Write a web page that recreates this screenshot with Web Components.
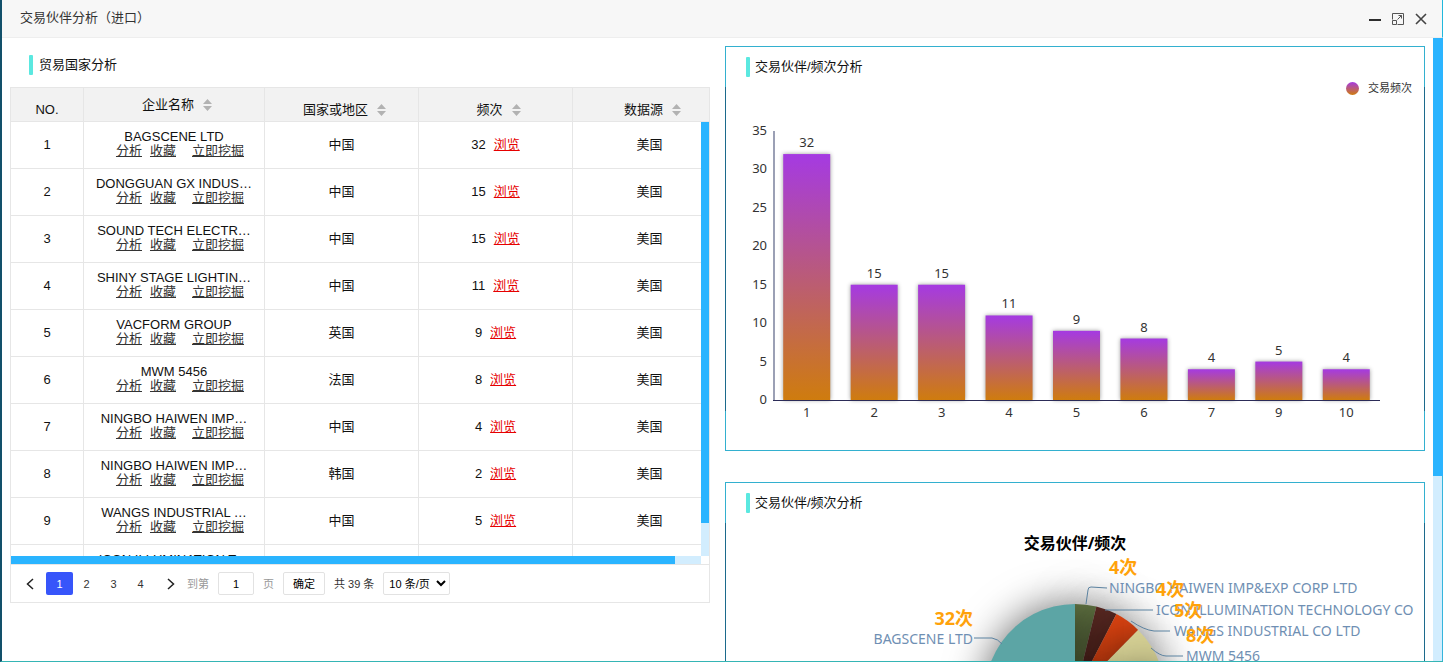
<!DOCTYPE html>
<html lang="zh-CN">
<head>
<meta charset="utf-8">
<title>交易伙伴分析（进口）</title>
<style>
html, body { margin: 0; height: 100%; overflow: hidden; }
body { font: 13px/18px "Liberation Sans", "Noto Sans CJK SC", sans-serif; color: #111; background: #0a3550; }
</style>
</head>
<body>
<app-window heading="交易伙伴分析（进口）">
  <div slot="left">
    <section-title>贸易国家分析</section-title>
    <partner-table></partner-table>
  </div>
  <chart-card slot="right" heading="交易伙伴/频次分析"><bar-chart></bar-chart></chart-card>
  <chart-card slot="right" heading="交易伙伴/频次分析"><pie-chart></pie-chart></chart-card>
</app-window>

<script>
const define = (name, render) => customElements.define(name, class extends HTMLElement {
  connectedCallback() {
    if (this.shadowRoot) return;
    this.attachShadow({ mode: 'open' }).innerHTML = render(this);
  }
});

define('section-title', () => `
<style>
:host { display: flex; align-items: center; gap: 6px; padding: 17px 0 12px 19px; }
i { width: 4px; height: 20px; border-radius: 1px; background: #5be8e0; }
h2 { margin: 0; font: inherit; }
</style>
<i></i><h2><slot></slot></h2>`);

define('chart-card', el => `
<style>
:host { display: block; border: 1px solid; border-image: linear-gradient(#33b0cf 41px, #1c6a8c 41px calc(100% - 40px), #33b0cf calc(100% - 40px)) 1; }
section-title { padding: 10px 0 10px 20px; gap: 5px; }
</style>
<section-title>${el.getAttribute('heading')}</section-title><slot></slot>`);

define('app-window', el => `
<style>
:host { display: flex; flex-direction: column; height: 100vh; box-sizing: border-box; border-left: 2px solid #12506a; border-bottom: 1px solid #35b5b5; background: #fff; }
header { display: flex; align-items: center; justify-content: space-between; height: 37px; padding: 0 14px 0 18px; background: #f7f7f7; border-bottom: 1px solid #eee; border-right: 1px solid #22b8dc; }
h1 { margin: 0; padding-bottom: 2px; font: inherit; color: #333; }
nav { display: flex; gap: 9px; }
button { display: flex; padding: 0; border: 0; background: none; }
main { flex: 1; min-height: 0; display: grid; grid-template-columns: 1fr 10px; }
.content { min-width: 0; overflow: hidden; display: grid; grid-template-columns: 1fr 1fr; gap: 15px; padding: 0 8px; }
.left { min-width: 0; }
.right { min-width: 0; display: flex; flex-direction: column; gap: 31px; padding-top: 8px; }
.bar { background: #d2edfe; border-right: 1px solid #35b5dc; }
.thumb { height: 438px; margin-right: -1px; background: #2ab4ff; }
</style>
<header><h1>${el.getAttribute('heading')}</h1>
<nav>
<button aria-label="最小化"><svg width="14" height="14"><path d="M1 8h12" stroke="#2d2d2d" stroke-width="2"/></svg></button>
<button aria-label="最大化"><svg width="14" height="14" fill="none" stroke="#555"><path d="M1.500 7.500V1.500h11v11H6.500M1.500 8.500h4v4h-4zM6.500 7.500L10.500 3.500M7.500 3.500H10.500V6.500"/></svg></button>
<button aria-label="关闭"><svg width="14" height="14"><path d="M2 2l10 10M12 2L2 12" stroke="#444" stroke-width="1.600"/></svg></button>
</nav></header>
<main><div class="content"><div class="left"><slot name="left"></slot></div><div class="right"><slot name="right"></slot></div></div>
<div class="bar"><div class="thumb"></div></div></main>`);

const ROWS = [
  ['BAGSCENE LTD', '中国', 32], ['DONGGUAN GX INDUS…', '中国', 15],
  ['SOUND TECH ELECTR…', '中国', 15], ['SHINY STAGE LIGHTIN…', '中国', 11],
  ['VACFORM GROUP', '英国', 9], ['MWM 5456', '法国', 8],
  ['NINGBO HAIWEN IMP…', '中国', 4], ['NINGBO HAIWEN IMP…', '韩国', 2],
  ['WANGS INDUSTRIAL …', '中国', 5], ['ICON ILLUMINATION T…', '中国', 4]
];

define('sort-label', () => `
<style>
:host { display: inline-flex; align-items: center; gap: 9px; padding-left: 6px; }
</style>
<span><slot></slot></span><svg width="9" height="12" fill="#b2b2b2"><path d="M0 5L4.500 0 9 5zM0 7h9L4.500 12z"/></svg>`);

define('partner-table', () => `
<style>
:host { display: block; border: 1px solid #e6e6e6; }
.view { display: grid; grid-template: 34px 434px 8px / 1fr 8px; }
.clip { grid-area: 1 / 1 / 3 / 3; overflow: hidden; }
table { table-layout: fixed; width: 716px; border-collapse: separate; border-spacing: 0; }
th, td { box-sizing: border-box; padding: 0; border: 0 solid #e6e6e6; border-width: 0 1px 1px 0; text-align: center; font-weight: inherit; }
th { height: 34px; background: #f2f2f2; padding-top: 10px; }
th.name { padding: 0; }
td { height: 47px; }
.title { line-height: 14px; white-space: nowrap; }
.links { display: flex; justify-content: center; padding: 0 0 2px 12px; line-height: 14px; }
.links a { color: #333; margin-right: 8px; }
.links a + a { margin-right: 16px; }
.links a:last-child { margin: 0; }
.count a { color: #e60000; margin-left: 8px; }
.v { grid-area: 2 / 2; background: #d2edfe; }
.v i { display: block; height: 401px; background: #2ab4ff; }
.h { grid-area: 3 / 1; background: #d2edfe; }
.h i { display: block; width: calc(100% - 26px); height: 8px; background: #2ab4ff; }
.v, .h { position: relative; }
</style>
<div class="view"><div class="clip"><table>
<colgroup><col style="width:73px"><col style="width:181px"><col style="width:154px"><col style="width:154px"><col style="width:154px"></colgroup>
<thead><tr><th>NO.</th><th class="name"><sort-label>企业名称</sort-label></th><th><sort-label>国家或地区</sort-label></th><th><sort-label>频次</sort-label></th><th><sort-label>数据源</sort-label></th></tr></thead>
<tbody>${ROWS.map(([n, c, k], i) => `<tr><td>${i + 1}</td><td><div class="title">${n}</div><div class="links"><a href="#">分析</a><a href="#">收藏</a><a href="#">立即挖掘</a></div></td><td>${c}</td><td class="count">${k}<a href="#">浏览</a></td><td>美国</td></tr>`).join('')}</tbody>
</table></div><div class="v"><i></i></div><div class="h"><i></i></div></div>
<page-bar></page-bar>`);

define('page-bar', () => `
<style>
:host { display: flex; align-items: center; gap: 9px; height: 37px; padding: 0 2px; border-top: 1px solid #e6e6e6; font-size: 11px; line-height: 16px; color: #333; }
nav { display: flex; margin-right: -9px; }
nav a { display: flex; align-items: center; justify-content: center; width: 27px; height: 23px; color: #333; text-decoration: none; }
nav a:first-child, nav a:last-child { margin: 0 3px; }
nav a[aria-current] { background: #3755fa; color: #fff; border-radius: 2px; }
label { display: flex; align-items: center; gap: 9px; color: #999; }
input, button, select { box-sizing: border-box; height: 23px; border: 1px solid #e2e2e2; border-radius: 2px; background: #fff; font: inherit; color: #000; padding: 0; text-align: center; }
input { width: 36px; }
button { width: 42px; }
select { width: 67px; padding: 0 1px; text-align: left; }
svg { fill: none; stroke: #222; stroke-width: 1.500; }
</style>
<nav><a href="#" aria-label="上一页"><svg width="8" height="12"><path d="M7 1L1.500 6 7 11"/></svg></a><a href="#" aria-current="page">1</a><a href="#">2</a><a href="#">3</a><a href="#">4</a><a href="#" aria-label="下一页"><svg width="8" height="12"><path d="M1 1l5.500 5L1 11"/></svg></a></nav>
<label>到第<input type="text" value="1">页</label>
<button>确定</button><span>共 39 条</span>
<select aria-label="每页条数"><option>10 条/页</option></select>`);

const BARS = [[1, 32], [2, 15], [3, 15], [4, 11], [5, 9], [6, 8], [7, 4], [9, 5], [10, 4]];
define('bar-chart', () => {
  const x0 = 47, base = 313, unit = 269 / 35, pitch = 607 / 9;
  const ticks = [0, 5, 10, 15, 20, 25, 30, 35].map(v => `<text x="41" y="${base - v * unit + 4}" text-anchor="end">${v}</text>`).join('');
  const bars = BARS.map(([n, v], i) => {
    const cx = x0 + pitch * (i + .5), h = v * unit;
    return `<rect x="${cx - 23.5}" y="${base - h}" width="47" height="${h}" fill="url(#g)" class="bar"/>
<text x="${cx}" y="${base - h - 7}" text-anchor="middle">${v}</text><text x="${cx}" y="330" text-anchor="middle">${n}</text>`;
  }).join('');
  return `
<style>
:host { display: block; }
svg { display: block; width: 100%; overflow: visible; font: 13px "Noto Sans", "Noto Sans CJK SC", sans-serif; fill: #333; }
.bar { filter: drop-shadow(0 0 2px rgba(0,0,0,.4)); }
.legend { font-size: 11px; }
</style>
<svg viewBox="0 0 698 363"><defs><linearGradient id="g" x2="0" y2="1"><stop stop-color="#a53ae2"/><stop offset="1" stop-color="#cf7c0e"/></linearGradient></defs>
<circle cx="626.500" cy="1.500" r="6.500" fill="url(#g)"/><text class="legend" x="642" y="5">交易频次</text>
${ticks}${bars}
<path d="M48 44V313" stroke="#7a819c" stroke-width="1.500"/><path d="M47 313.500H654" stroke="#2c2c58"/></svg>`;
});

define('pie-chart', () => {
  const cx = 349, cy = 171, r = 90, total = 105;
  const parts = [[4, '#6b7f4a'], [4, '#5e2b24'], [5, '#dd4412'], [8, '#d5d094'], [9, '#7f9cb0'], [11, '#c98a4a'], [15, '#8b6f9a'], [15, '#a05050'], [2, '#607080'], [32, '#5ca5a5']];
  let sum = 0;
  const at = v => { const a = v / total * 2 * Math.PI; return `${cx + r * Math.sin(a)} ${cy - r * Math.cos(a)}`; };
  const slices = parts.map(([v, c]) => { const s = at(sum); sum += v; return `<path class="slice" d="M${cx} ${cy}L${s}A${r} ${r} 0 0 1 ${at(sum)}Z" fill="${c}"/>`; }).join('');
  const labels = [
    ['NINGBO HAIWEN IMP&amp;EXP CORP LTD', 4, 383, 70], ['ICON ILLUMINATION TECHNOLOGY CO', 4, 430, 92],
    ['WANGS INDUSTRIAL CO LTD', 5, 448, 113], ['MWM 5456', 8, 460, 138]
  ];
  return `
<style>
:host { display: block; }
svg { display: block; width: 100%; overflow: visible; font: 14px "Noto Sans", "Noto Sans CJK SC", sans-serif; }
.slice { filter: drop-shadow(0 0 20px rgba(0,0,0,.6)); }
.name { fill: #6f8fb3; }
.line { fill: none; stroke: #5b82a0; }
.n { font-size: 18px; font-weight: 700; fill: #ffa20a; }
.head { font-size: 16px; font-weight: 700; }
</style>
<svg viewBox="0 0 698 363">
${slices}
<path class="line" d="M360 81L362 67Q362 64 365 64L381 65M379 87H427M405 98Q418 107 428 108H444M425 125Q434 133 440 133H457M248 115H266Q272 116 276 121"/>
<text class="head" x="349" y="26" text-anchor="middle">交易伙伴/频次</text>
${labels.map(([t, v, x, y]) => `<text class="name" x="${x}" y="${y}">${t}</text>`).join('')}
<text class="name" x="247" y="121" text-anchor="end">BAGSCENE LTD</text>
${labels.map(([t, v, x, y]) => `<text class="n" x="${x}" y="${y - 19}">${v}次</text>`).join('')}
<text class="n" x="247" y="102" text-anchor="end">32次</text>
</svg>`;
});
</script>
</body>
</html>
